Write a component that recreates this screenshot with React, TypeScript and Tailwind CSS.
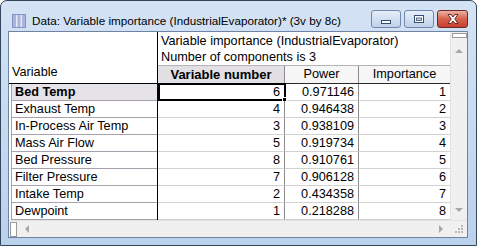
import React from "react";

const rows = [
  { name: "Bed Temp", num: 6, power: "0.971146", imp: 1 },
  { name: "Exhaust Temp", num: 4, power: "0.946438", imp: 2 },
  { name: "In-Process Air Temp", num: 3, power: "0.938109", imp: 3 },
  { name: "Mass Air Flow", num: 5, power: "0.919734", imp: 4 },
  { name: "Bed Pressure", num: 8, power: "0.910761", imp: 5 },
  { name: "Filter Pressure", num: 7, power: "0.906128", imp: 6 },
  { name: "Intake Temp", num: 2, power: "0.434358", imp: 7 },
  { name: "Dewpoint", num: 1, power: "0.218288", imp: 8 },
];

const CaptionButton = ({ kind }: { kind: "min" | "max" | "close" }) => {
  const isClose = kind === "close";
  return (
    <div
      className={
        isClose
          ? "flex h-[18px] w-[31px] items-center justify-center rounded-[3px] border border-[#6e2a22] bg-gradient-to-b from-[#eab2a4] via-[#d6604c] to-[#c5402f]"
          : "flex h-[18px] w-[30px] items-center justify-center rounded-[3px] border border-[#6f88ab] bg-gradient-to-b from-[#e6eef8] via-[#d2e0f1] to-[#bfd2ea]"
      }
    >
      {kind === "min" && (
        <svg width="12" height="12" viewBox="0 0 12 12">
          <rect x="1.5" y="7.5" width="9" height="3" fill="#fff" stroke="#334d73" />
        </svg>
      )}
      {kind === "max" && (
        <svg width="12" height="12" viewBox="0 0 12 12">
          <rect x="1.5" y="2.5" width="9" height="7" fill="#fff" stroke="#334d73" />
          <rect x="3.5" y="5" width="5" height="2.5" fill="#c9d8eb" stroke="#334d73" strokeWidth="0.8" />
        </svg>
      )}
      {isClose && (
        <svg width="14" height="12" viewBox="0 0 14 12">
          <path
            d="M2 1.5 L5 1.5 L7 4 L9 1.5 L12 1.5 L8.7 6 L12 10.5 L9 10.5 L7 8 L5 10.5 L2 10.5 L5.3 6 Z"
            fill="#fff"
            stroke="#5d1d16"
            strokeWidth="0.9"
            strokeLinejoin="round"
          />
        </svg>
      )}
    </div>
  );
};

const Arrow = ({ dir }: { dir: "up" | "down" | "left" | "right" }) => {
  const pts = {
    up: "0,4 4,0 8,4",
    down: "0,0 8,0 4,4",
    left: "4,0 4,8 0,4",
    right: "0,0 4,4 0,8",
  }[dir];
  const vertical = dir === "up" || dir === "down";
  return (
    <svg width={vertical ? 8 : 4} height={vertical ? 4 : 8} viewBox={vertical ? "0 0 8 4" : "0 0 4 8"}>
      <polygon points={pts} fill="#a7a7a7" />
    </svg>
  );
};

export default function App() {
  return (
    <div className="h-[246px] w-[477px] bg-white font-['Liberation_Sans',Arial,sans-serif] text-black">
      <div className="flex h-full w-full flex-col overflow-hidden rounded-t-[7px] border border-[#34465c] bg-gradient-to-b from-[#d4e3f4] to-[#bad1ec]">
        {/* title bar */}
        <div className="flex h-[30px] shrink-0 items-start justify-between pr-[8px] pl-[11px]">
          <div className="flex h-full items-center gap-[6px] pt-[9px]">
            <svg width="14" height="14" viewBox="0 0 14 14">
              <rect x="0.5" y="0.5" width="13" height="13" fill="#aab4dc" stroke="#8592c4" />
              <rect x="4" y="1" width="1.5" height="12" fill="#e6eaf7" />
              <rect x="8.5" y="1" width="1.5" height="12" fill="#e6eaf7" />
            </svg>
            <span className="text-[11.7px] leading-none whitespace-nowrap">
              Data: Variable importance (IndustrialEvaporator)* (3v by 8c)
            </span>
          </div>
          <div className="flex gap-[3px] pt-[9px]">
            <CaptionButton kind="min" />
            <CaptionButton kind="max" />
            <CaptionButton kind="close" />
          </div>
        </div>

        {/* client */}
        <div className="mr-[8px] mb-[7px] ml-[7px] flex flex-1 flex-col border border-[#6f84a2] bg-white">
          <div className="flex h-[188px]">
            {/* spreadsheet */}
            <div className="flex w-[441px] flex-col text-[12.7px] leading-none">
              {/* header */}
              <div className="flex h-[52px]">
                <div className="flex w-[149px] items-end border-r border-b border-black pb-[4px] pl-[3px]">
                  Variable
                </div>
                <div className="flex flex-1 flex-col border-b border-[#2a2a2a]">
                  <div className="h-[33px] pt-[1px] pl-[3px] leading-[16px] whitespace-nowrap">
                    <div>Variable importance (IndustrialEvaporator)</div>
                    <div>Number of components is 3</div>
                  </div>
                  <div className="flex h-[18px] border-t border-[#b4b4b4]">
                    <div className="flex w-[127px] items-center justify-center border-r border-[#8c8c8c] bg-[#e2e0e4] text-[13px] font-bold">
                      Variable number
                    </div>
                    <div className="flex w-[74px] items-center justify-center border-r border-[#8c8c8c] bg-[#f6f6f6]">
                      Power
                    </div>
                    <div className="flex flex-1 items-center justify-center bg-[#f6f6f6]">
                      Importance
                    </div>
                  </div>
                </div>
              </div>

              {/* rows */}
              {rows.map((r, i) => (
                <div key={r.name} className="flex h-[17px]">
                  <div className="flex w-[149px] border-r border-black pl-[2px]">
                    <div
                      className={
                        "flex flex-1 items-center border-b border-l border-[#a8a2ae] pl-[3px] " +
                        (i === 0 ? "bg-[#e6e3e8] font-bold" : "bg-white")
                      }
                    >
                      {r.name}
                    </div>
                  </div>
                  <div className="relative flex w-[127px] items-center justify-end border-r border-b border-r-[#8c8c8c] border-b-[#d2d2d2] pr-[4px]">
                    {r.num}
                    {i === 0 && (
                      <div className="absolute -top-[1px] -right-[2px] -bottom-[1px] left-0 border-2 border-black">
                        <div className="absolute -right-[3px] -bottom-[3px] h-[5px] w-[5px] border border-white bg-black" />
                      </div>
                    )}
                  </div>
                  <div className="flex w-[74px] items-center justify-end border-r border-b border-r-[#8c8c8c] border-b-[#d2d2d2] pr-[4px]">
                    {r.power}
                  </div>
                  <div className="flex flex-1 items-center justify-end border-b border-[#d2d2d2] pr-[4px]">
                    {r.imp}
                  </div>
                </div>
              ))}
            </div>

            {/* vertical scrollbar */}
            <div className="flex w-[17px] flex-col items-center border-l border-[#e2e2e2] bg-[#f0f0f0]">
              <div className="mt-[1px] h-[5px] w-[15px] border border-[#9a9a9a] bg-white" />
              <div className="mt-[11px]">
                <Arrow dir="up" />
              </div>
              <div className="flex-1" />
              <div className="mb-[8px]">
                <Arrow dir="down" />
              </div>
            </div>
          </div>

          {/* horizontal scrollbar */}
          <div className="flex h-[17px] items-center border-t border-[#e2e2e2] bg-[#f0f0f0]">
            <div className="ml-[1px] h-[15px] w-[7px] border border-[#9a9a9a] bg-white" />
            <div className="ml-[8px]">
              <Arrow dir="left" />
            </div>
            <div className="flex-1" />
            <div className="mr-[7px]">
              <Arrow dir="right" />
            </div>
            <div className="relative h-[16px] w-[17px]">
              <svg className="absolute right-[3px] bottom-[3px]" width="9" height="9" viewBox="0 0 9 9">
                <rect x="6" y="0" width="2" height="2" fill="#b8b8b8" />
                <rect x="3" y="3" width="2" height="2" fill="#b8b8b8" />
                <rect x="6" y="3" width="2" height="2" fill="#b8b8b8" />
                <rect x="0" y="6" width="2" height="2" fill="#b8b8b8" />
                <rect x="3" y="6" width="2" height="2" fill="#b8b8b8" />
                <rect x="6" y="6" width="2" height="2" fill="#b8b8b8" />
              </svg>
            </div>
          </div>
        </div>
      </div>
    </div>
  );
}
